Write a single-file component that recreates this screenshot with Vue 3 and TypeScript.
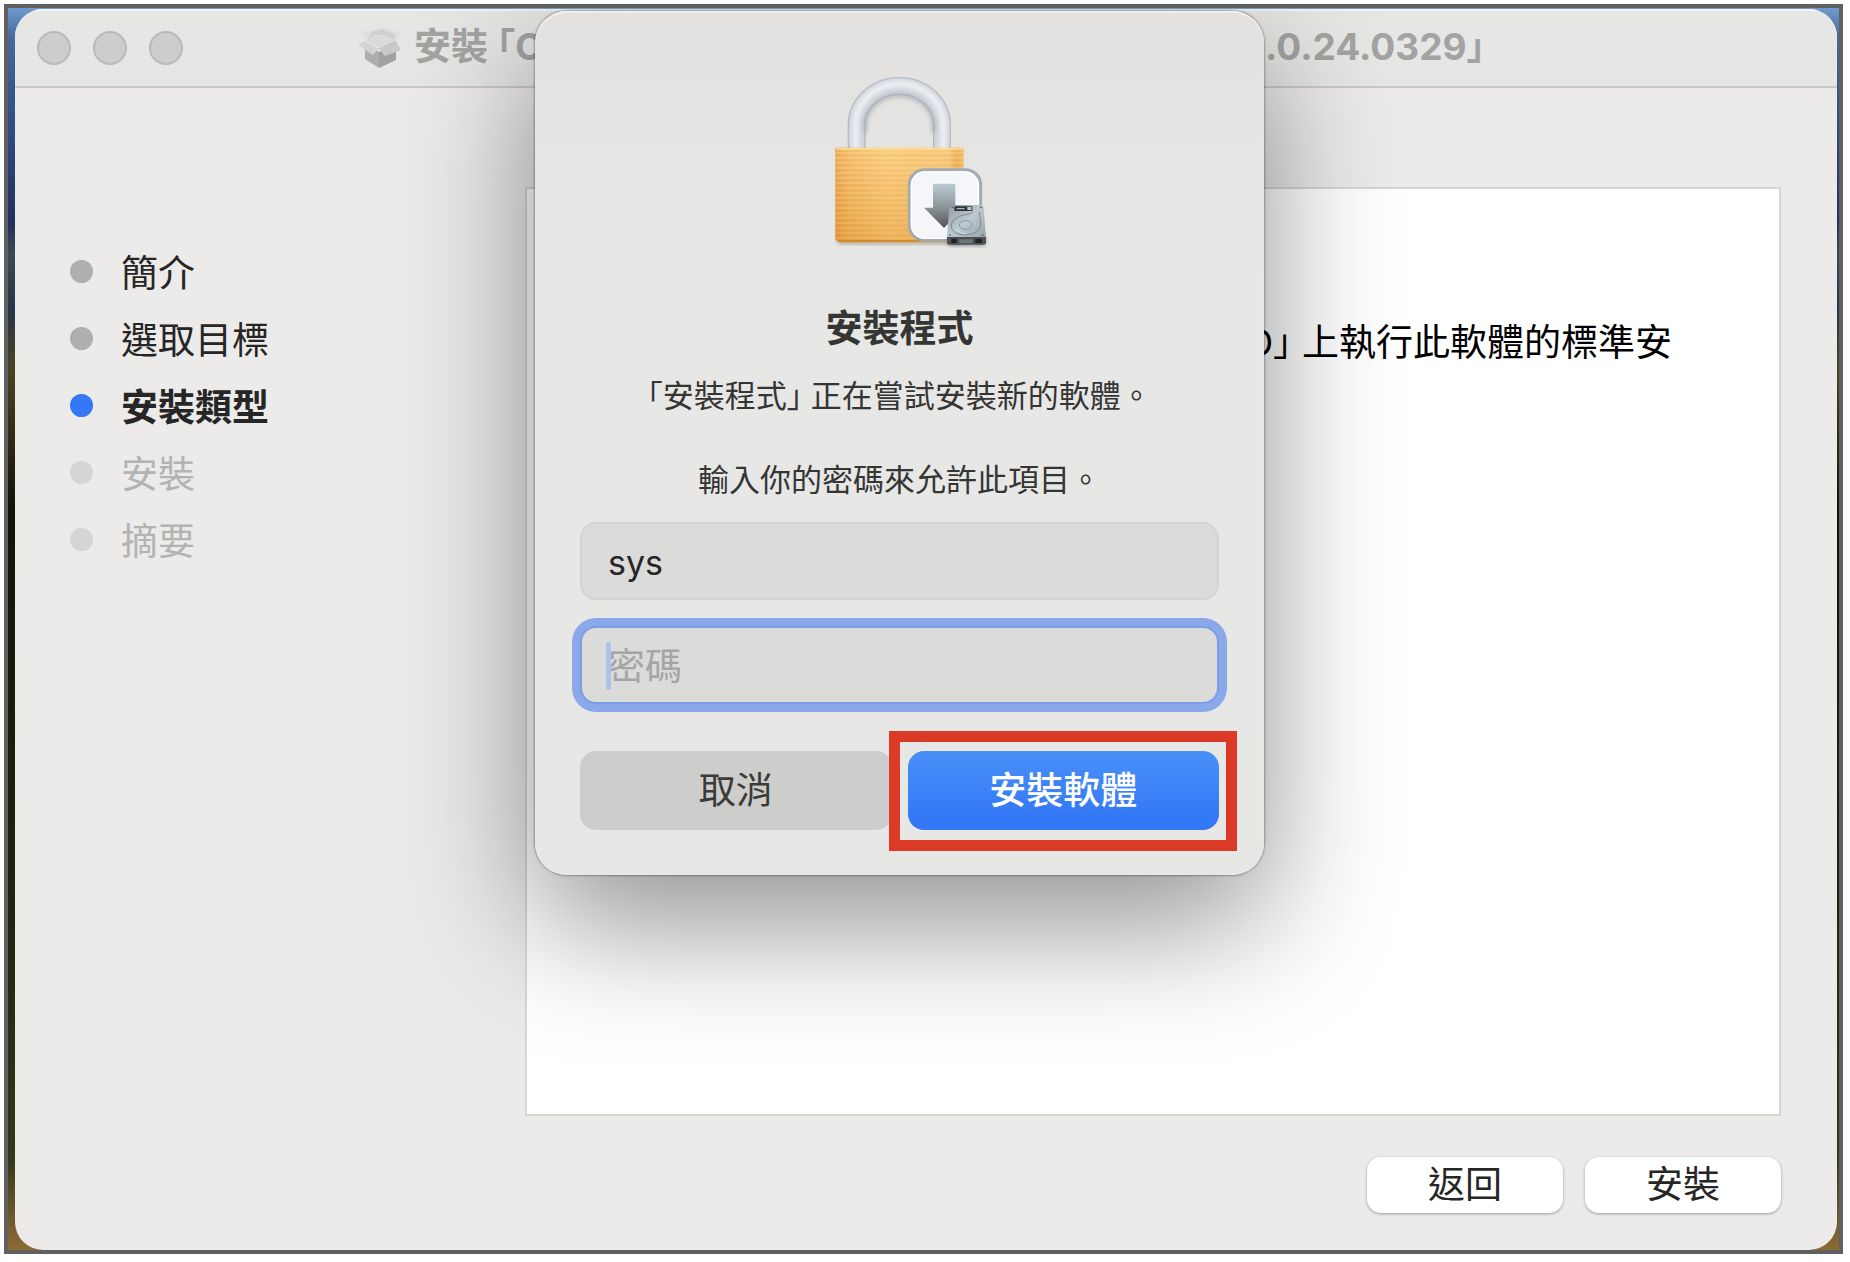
<script setup lang="ts">
import { ref } from 'vue'

type StepState = 'done' | 'current' | 'pending'

interface Step {
  label: string
  state: StepState
}

const steps: Step[] = [
  { label: '簡介', state: 'done' },
  { label: '選取目標', state: 'done' },
  { label: '安裝類型', state: 'current' },
  { label: '安裝', state: 'pending' },
  { label: '摘要', state: 'pending' },
]

const account = ref('sys')
const password = ref('')
</script>

<template>
  <div class="desktop">
    <main class="window">
      <header class="titlebar">
        <div class="lights">
          <button type="button" class="light" aria-label="關閉"></button>
          <button type="button" class="light" aria-label="縮到最小"></button>
          <button type="button" class="light" aria-label="縮放"></button>
        </div>
        <div class="title">
          <svg class="package" viewBox="0 0 44 42" aria-hidden="true">
            <path d="M7 18 L21 26 L21 42 L7 33 Z" fill="#adadab" />
            <path d="M21 26 L38 20 L38 34 L21 42 Z" fill="#a1a19f" />
            <path d="M4 6 L14 5 L24 1 L43 7 L38 15 L22 10 L9 15 Z" fill="#dededc" />
            <path d="M14 6 L25 3 L37 9 L36 15 L22 20 L9 15 Z" fill="#cfcfcd" />
            <path d="M9 15 L16 9 L27 9 L37 14 L22 22 Z" fill="#dadad8" />
            <path d="M7 15 L21 22 L15 29 L0 19 Z" fill="#d3d3d1" />
            <path d="M20 22 L37 14 L43 24 L27 30 Z" fill="#c9c9c7" />
            <path d="M4 6 L14 5 L24 1 L43 7 L37 14 L20 22 L7 15 Z" fill="none" stroke="#e2e2e0" stroke-width="1" />
          </svg>
          <span>安裝 <span class="half">「</span>C</span>
          <span class="version">.0.24.0329<span class="half">」</span></span>
        </div>
      </header>

      <div class="body">
        <ol class="steps">
          <li v-for="step in steps" :key="step.label" :class="['step', step.state]">
            <span class="dot"></span><span class="label">{{ step.label }}</span>
          </li>
        </ol>
        <div class="main">
          <section class="panel">
            <p>D<span class="half">」</span> 上執行此軟體的標準安</p>
          </section>
          <footer class="actions">
            <button type="button" class="push">返回</button>
            <button type="button" class="push">安裝</button>
          </footer>
        </div>
      </div>

      <form class="dialog" role="dialog" aria-labelledby="dialog-title" @submit.prevent>
        <svg class="lock" viewBox="0 28 540 540" aria-hidden="true">
          <defs>
            <linearGradient id="brass" x1="0" x2="1" y1="0" y2="0">
              <stop offset="0" stop-color="#d98f38" />
              <stop offset="0.03" stop-color="#e2993f" />
              <stop offset="0.11" stop-color="#edb059" />
              <stop offset="0.4" stop-color="#f6c878" />
              <stop offset="0.88" stop-color="#f3c070" />
              <stop offset="0.95" stop-color="#e09a42" />
              <stop offset="1" stop-color="#edb45f" />
            </linearGradient>
            <linearGradient id="warm" x1="0" x2="0" y1="0" y2="1">
              <stop offset="0" stop-color="#ffd890" stop-opacity="0.35" />
              <stop offset="1" stop-color="#e0922c" stop-opacity="0.4" />
            </linearGradient>
            <pattern id="ribs" width="20" height="15" patternUnits="userSpaceOnUse">
              <rect width="20" height="4" y="2" fill="#ffdc9a" opacity="0.6" />
              <rect width="20" height="2" y="9" fill="#d98f38" opacity="0.3" />
            </pattern>
            <linearGradient id="arrow" x1="0" x2="0" y1="0" y2="1">
              <stop offset="0" stop-color="#b9ccd4" />
              <stop offset="0.5" stop-color="#8f999c" />
              <stop offset="1" stop-color="#545454" />
            </linearGradient>
            <linearGradient id="drive" x1="0" x2="1" y1="0" y2="1">
              <stop offset="0" stop-color="#8f9ba2" />
              <stop offset="0.5" stop-color="#bccad0" />
              <stop offset="1" stop-color="#94a2a9" />
            </linearGradient>
            <filter id="soft" x="-20%" y="-20%" width="140%" height="140%">
              <feGaussianBlur stdDeviation="6" />
            </filter>
          </defs>
          <path d="M140 270 V190 A128 117 0 0 1 396 190 V270" fill="none" stroke="#b3b9c1" stroke-width="54" />
          <path d="M140 270 V190 A128 117 0 0 1 396 190 V270" fill="none" stroke="#d3d7dd" stroke-width="46" />
          <path d="M137 270 V187 A131 120 0 0 1 400 187 V270" fill="none" stroke="#f0f3f7" stroke-width="16" filter="url(#soft)" />
          <path d="M165 215 V195 A103 94 0 0 1 371 195 V215" fill="none" stroke="#a1a8b0" stroke-width="9" filter="url(#soft)" />
          <rect x="82" y="520" width="380" height="26" rx="10" fill="#6d5a40" opacity="0.5" filter="url(#soft)" />
          <path d="M76 258 H461 V530 Q461 542 445 542 H100 Q76 542 76 530 Z" fill="url(#brass)" />
          <path d="M76 270 H461 V530 Q461 542 445 542 H100 Q76 542 76 530 Z" fill="url(#ribs)" />
          <path d="M76 258 H461 V530 Q461 542 445 542 H100 Q76 542 76 530 Z" fill="url(#warm)" />
          <path d="M78 262 H459" stroke="#ffdf9e" stroke-width="5" />
          <path d="M84 538 H450" stroke="#c98227" stroke-width="4" />
          <rect x="298" y="324" width="214" height="212" rx="46" fill="#f5f6f9" stroke="#a0abb1" stroke-width="9" />
          <rect x="304" y="331" width="200" height="199" rx="40" fill="none" stroke="#ffffff" stroke-width="4" />
          <path d="M369 366 H436 V438 H462 L402 499 L342 438 H369 Z" fill="url(#arrow)" />
          <rect x="414" y="524" width="112" height="28" rx="5" fill="#3a3f42" opacity="0.5" filter="url(#soft)" />
          <path d="M424 430 H514 Q520 430 521 436 L528 528 H411 L418 436 Q419 430 424 430 Z" fill="url(#drive)" />
          <path d="M411 526 H528 V543 Q528 549 521 549 H418 Q411 549 411 543 Z" fill="#4b5052" />
          <path d="M424 531 H440 V544 H424 Z M496 531 H516 V544 H496 Z" fill="#202324" />
          <path d="M448 533 H488 V545 H448 Z" fill="#6f7679" />
          <rect x="433" y="434" width="54" height="14" rx="2" fill="#303538" />
          <path d="M440 441 H464" stroke="#aeb6ba" stroke-width="4" />
          <rect x="472" y="436" width="12" height="9" fill="#c2c9cc" />
          <path d="M488 450 C488 462 425 454 424 494 C424 528 504 528 511 494 C514 476 508 466 508 450" fill="none" stroke="#7d8a92" stroke-width="3" />
          <ellipse cx="467" cy="490" rx="19" ry="13" fill="none" stroke="#8995a0" stroke-width="3" />
          <path d="M440 502 Q448 516 470 516" fill="none" stroke="#dde6ea" stroke-width="3" />
          <circle cx="427" cy="437" r="3" fill="#5f696f" />
          <circle cx="513" cy="437" r="3" fill="#5f696f" />
          <circle cx="420" cy="520" r="3" fill="#66727a" />
          <circle cx="518" cy="520" r="3" fill="#66727a" />
        </svg>

        <h1 id="dialog-title">安裝程式</h1>
        <p class="message">
          <span class="half">「</span>安裝程式<span class="half">」</span> 正在嘗試安裝新的軟體。<br /><br />輸入你的密碼來允許此項目。
        </p>

        <div class="fields">
          <input v-model="account" class="field" type="text" aria-label="使用者名稱" />
          <div class="focused">
            <input v-model="password" class="field" type="password" placeholder="密碼" aria-label="密碼" />
            <span class="caret"></span>
          </div>
        </div>

        <div class="choices">
          <button type="button" class="choice cancel">取消</button>
          <div class="marked">
            <button type="submit" class="choice install">安裝軟體</button>
          </div>
        </div>
      </form>
    </main>
  </div>
</template>

<style>
body {
  margin: 0;
  background: #fff;
}
#app {
  padding: 4px 7px 8px 4px;
}
</style>

<style scoped>
.desktop {
  box-sizing: border-box;
  min-height: calc(100vh - 12px);
  display: flex;
  padding: 1px 2px 0 7px;
  border: 4px solid #606060;
  background: linear-gradient(
    to bottom,
    #6f9bcb 0,
    #46689f 30px,
    #34528c 100px,
    #22305f 215px,
    #3c4a52 245px,
    #27344c 300px,
    #4a4420 360px,
    #14120a 500px,
    #20240f 900px,
    #33381a 1150px,
    #8a6a35 1240px
  );
  font-family: Inter, 'Noto Sans CJK TC', sans-serif;
  font-size: 37px;
  color: #262626;
}
.window {
  position: relative;
  flex: 1;
  display: flex;
  flex-direction: column;
  overflow: hidden;
  border-radius: 28px;
  background: #ecebe9;
}
button,
input {
  font: inherit;
  color: inherit;
  border: 0;
  margin: 0;
}
.half {
  font-feature-settings: 'halt';
}

/* Title bar */
.titlebar {
  display: flex;
  align-items: center;
  height: 77px;
  border-bottom: 2px solid #c9c9c8;
  background: #e6e6e4;
  box-shadow: inset 0 2px 0 #f4f4f3;
}
.lights {
  display: flex;
  gap: 22px;
  padding-left: 22px;
}
.light {
  width: 34px;
  height: 34px;
  padding: 0;
  border: 2px solid #b9b9b7;
  border-radius: 50%;
  background: #cdcdcb;
}
.title {
  flex: 1;
  display: flex;
  align-items: center;
  padding: 0 352px 2px 175px;
  font-weight: 700;
  line-height: 44px;
  color: #a3a3a1;
  white-space: nowrap;
}
.package {
  width: 44px;
  height: 42px;
  margin-right: 12px;
}
.version {
  margin-left: auto;
}

/* Installer body */
.body {
  flex: 1;
  display: flex;
}
.steps {
  box-sizing: border-box;
  width: 510px;
  margin: 0;
  padding: 150px 0 0 55px;
  list-style: none;
}
.step {
  display: flex;
  align-items: center;
  gap: 28px;
  height: 67px;
}
.label {
  padding-top: 4px;
  line-height: 44px;
}
.dot {
  width: 23px;
  height: 23px;
  border-radius: 50%;
  background: #afafad;
}
.current {
  font-weight: 700;
}
.current .dot {
  background: #3478f6;
}
.pending {
  color: #b3b3b1;
}
.pending .dot {
  background: #d5d5d3;
}
.main {
  flex: 1;
  display: flex;
  flex-direction: column;
  padding: 99px 56px 37px 0;
}
.panel {
  flex: 1;
  padding: 132px 107px 0 0;
  border: 2px solid #d6d6d3;
  background: #fff;
  color: #000;
  text-align: right;
}
.panel p {
  margin: 0;
  line-height: 44px;
}
.actions {
  display: flex;
  justify-content: flex-end;
  gap: 22px;
  padding-top: 41px;
}
.push {
  width: 196px;
  height: 56px;
  padding: 0;
  border-radius: 14px;
  background: #fff;
  box-shadow: 0 1px 3px rgba(0, 0, 0, 0.35);
  line-height: 52px;
}

/* Password prompt */
.dialog {
  position: absolute;
  top: 2px;
  left: 520px;
  box-sizing: border-box;
  width: 729px;
  padding: 60px 45px 45px;
  border-radius: 32px;
  background: linear-gradient(to bottom, #e2e1df, #e7e7e5 260px);
  box-shadow:
    0 0 2px 1px rgba(0, 0, 0, 0.3),
    inset 0 2px 1px rgba(255, 255, 255, 0.5),
    0 48px 132px rgba(0, 0, 0, 0.44);
  text-align: center;
}
.lock {
  display: block;
  width: 180px;
  height: 180px;
  margin: 0 auto;
}
h1 {
  margin: 56px 0 24px;
  font-size: 37px;
  font-weight: 700;
  line-height: 44px;
  color: #353534;
}
.message {
  margin: 0 0 21px;
  font-size: 31px;
  line-height: 42px;
  color: #353534;
}
.fields {
  display: flex;
  flex-direction: column;
  gap: 26px;
}
.field {
  display: block;
  box-sizing: border-box;
  width: 100%;
  height: 78px;
  padding: 2px 26px 0;
  border: 2px solid #d3d3d1;
  border-radius: 16px;
  outline: 0;
  background: #dbdbd9;
  font-size: 34px;
}
.focused {
  position: relative;
}
.focused .field {
  border-color: #7c9ee6;
  box-shadow: 0 0 0 8px #8ba8eb;
  font-size: 37px;
}
.field::placeholder {
  color: #a5a5a3;
  opacity: 1;
}
.caret {
  position: absolute;
  top: 16px;
  left: 26px;
  width: 5px;
  height: 48px;
  border-radius: 3px;
  background: #adc2e8;
}
.choices {
  display: flex;
  gap: 16px;
  padding-top: 47px;
}
.choice {
  display: block;
  width: 100%;
  height: 79px;
  padding: 0 0 6px;
  border-radius: 16px;
}
.cancel {
  flex: 1;
  background: #cdcdcb;
  color: #3b3b3a;
}
.marked {
  position: relative;
  flex: 1;
}
.marked::after {
  content: '';
  position: absolute;
  inset: -20px -18px -21px -19px;
  border: 11px solid #da3a26;
  pointer-events: none;
}
.install {
  background: linear-gradient(to bottom, #4a90f8, #3478f6 85%);
  color: #fff;
  font-weight: 500;
}
</style>
